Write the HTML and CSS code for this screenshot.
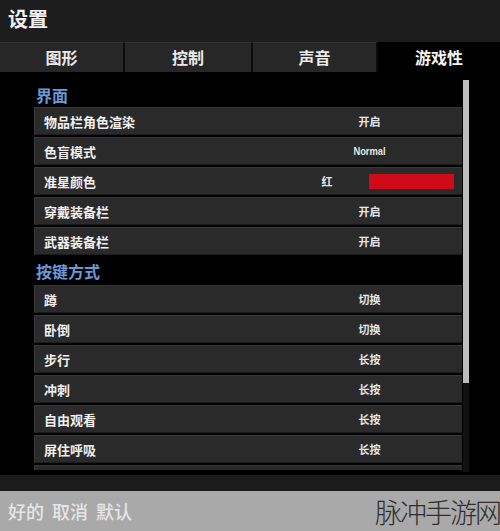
FILE: index.html
```html
<!DOCTYPE html>
<html lang="zh">
<head>
<meta charset="utf-8">
<link rel="stylesheet" href="styles.css">
</head>
<body>
<div class="app">
  <header class="header"><h1 class="title">设置</h1></header>
  <nav class="tabs">
    <div class="tab t1">图形</div>
    <div class="tab t2">控制</div>
    <div class="tab t3">声音</div>
    <div class="tab active">游戏性</div>
  </nav>
  <main class="content">
    <div class="list">
      <div class="section">界面</div>
      <div class="row"><span class="label">物品栏角色渲染</span><span class="value">开启</span></div>
      <div class="row"><span class="label">色盲模式</span><span class="value narrow">Normal</span></div>
      <div class="row"><span class="label">准星颜色</span><span class="value color"><span class="cname">红</span><span class="swatch"></span></span></div>
      <div class="row"><span class="label">穿戴装备栏</span><span class="value">开启</span></div>
      <div class="row"><span class="label">武器装备栏</span><span class="value">开启</span></div>
      <div class="section">按键方式</div>
      <div class="row"><span class="label">蹲</span><span class="value">切换</span></div>
      <div class="row"><span class="label">卧倒</span><span class="value">切换</span></div>
      <div class="row"><span class="label">步行</span><span class="value">长按</span></div>
      <div class="row"><span class="label">冲刺</span><span class="value">长按</span></div>
      <div class="row"><span class="label">自由观看</span><span class="value">长按</span></div>
      <div class="row"><span class="label">屏住呼吸</span><span class="value">长按</span></div>
      <div class="row empty"></div>
    </div>
    <div class="scrollbar"><div class="thumb"></div></div>
  </main>
  <div class="strip"></div>
  <footer class="footer">
    <div class="actions"><span>好的</span><span>取消</span><span>默认</span></div>
    <div class="watermark">脉冲手游网</div>
  </footer>
</div>
</body>
</html>
```

FILE: styles.css
```css
* { box-sizing: border-box; margin: 0; padding: 0; }
html, body { background: #000; }
body { width: 500px; height: 531px; overflow: hidden; font-family: "Noto Sans CJK SC", "Noto Sans", sans-serif; }
.app { display: flex; flex-direction: column; width: 500px; height: 531px; }
.app > * { flex-shrink: 0; }

.header { height: 42px; background: #1d1d1d; display: flex; align-items: center; padding-left: 8px; }
.title { font-size: 20px; font-weight: 700; color: #f2f2f2; line-height: 1; margin-top: -4px; }

.tabs { height: 30px; display: flex; background: #1d1d1d; }
.tab { display: flex; align-items: center; justify-content: center; font-size: 16px; font-weight: 700; color: #eaeaea; background: #272727; border-right: 2px solid #0b0b0b; border-top: 1px solid #303030; padding-bottom: 1px; }
.t1 { width: 125px; }
.t2 { width: 128px; }
.t3 { width: 125px; }
.tab.active { flex: 1; background: #000; border: none; color: #f4f4f4; }

.content { height: 403px; display: flex; background: #000; padding-bottom: 5px; }
.list { width: 462px; height: 398px; padding-left: 34px; padding-top: 10px; overflow: hidden; display: flex; flex-direction: column; gap: 2px; }
.section { height: 25px; flex: none; display: flex; align-items: center; padding-left: 2px; font-size: 16px; font-weight: 700; color: #6a9ad6; }
.section + .row { margin-top: -2px; }
.row + .section { height: 28px; }
.row { height: 28px; flex: none; display: grid; grid-template-columns: 250px 169px 1fr; align-items: center; background: #2a2a2a; border-top: 1px solid #363636; border-left: 1px solid #3a3a3a; border-bottom: 1px solid #1c1c1c; }
.label { padding-left: 9px; font-size: 13px; font-weight: 700; color: #f0f0f0; line-height: 1; }
.value { text-align: center; font-size: 11px; font-weight: 700; color: #e6e6e6; line-height: 1; }
.narrow { font-family: "Liberation Sans", sans-serif; font-size: 11px; transform: scaleX(0.85); }
.color { display: flex; align-items: center; }
.cname { flex: 1; text-align: center; }
.swatch { width: 85px; height: 15px; background: #cf0a19; }

.scrollbar { width: 6px; margin-left: 1px; margin-top: 8px; height: 392px; background: #111; }
.thumb { height: 303px; background: #bdbdbd; }

.strip { height: 16px; background: #1b1b1b; }
.footer { height: 40px; background: #a9a9a9; display: flex; align-items: center; justify-content: space-between; padding-left: 8px; overflow: hidden; }
.actions { display: flex; gap: 8px; font-size: 18px; color: #e6e6e6; font-weight: 500; line-height: 1; }
.watermark { font-size: 27px; line-height: 1; color: #2e2e2e; font-weight: 300; letter-spacing: -2px; margin-right: 0; }
```
